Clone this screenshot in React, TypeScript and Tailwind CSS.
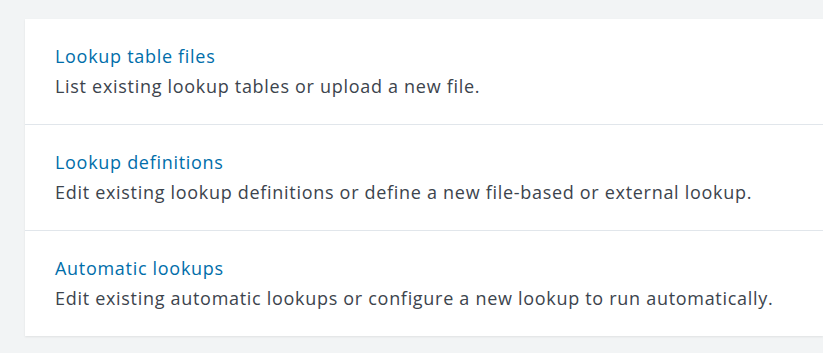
import React from 'react';

const items = [
  {
    title: 'Lookup table files',
    description: 'List existing lookup tables or upload a new file.',
  },
  {
    title: 'Lookup definitions',
    description: 'Edit existing lookup definitions or define a new file-based or external lookup.',
  },
  {
    title: 'Automatic lookups',
    description: 'Edit existing automatic lookups or configure a new lookup to run automatically.',
  },
];

export default function App() {
  return (
    <div className="min-h-[353px] w-[823px] bg-[#f2f4f5] pt-[19px] pl-[25px] font-['Open_Sans',sans-serif] tracking-[0.7px]">
      <div className="bg-white shadow-[0_1px_2px_rgba(0,0,0,0.08)]">
        {items.map((item, i) => (
          <div
            key={item.title}
            className={`pl-[30px] pt-[22px] ${i > 0 ? 'h-[106px] border-t border-[#e1e6eb]' : 'h-[105px]'}`}
          >
            <a href="#" className="block text-[18px] leading-[30px] text-[#006eaa]">
              {item.title}
            </a>
            <p className="text-[18px] leading-[30px] text-[#3c444d]">{item.description}</p>
          </div>
        ))}
      </div>
    </div>
  );
}
